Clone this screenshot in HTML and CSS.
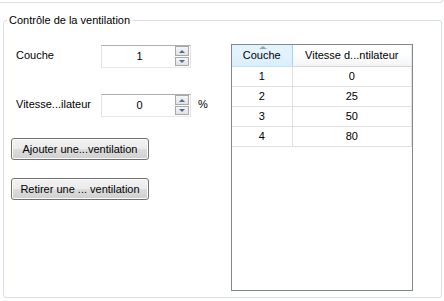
FILE: index.html
```html
<!DOCTYPE html>
<html lang="fr">
<head>
  <meta charset="UTF-8">
  <title>Contrôle de la ventilation</title>
  <link rel="stylesheet" href="styles.css">
</head>
<body>

  <!-- bottom edge of the group above -->
  <div class="prev-group"></div>

  <fieldset class="group">
    <legend>Contrôle de la ventilation</legend>

    <div class="content">
      <div class="controls">
        <div class="field-row">
          <label class="field-label">Couche</label>
          <div class="spinbox">
            <span class="spin-value">1</span>
            <div class="spin-buttons">
              <span class="spin-btn up"></span>
              <span class="spin-btn down"></span>
            </div>
          </div>
        </div>

        <div class="field-row second">
          <label class="field-label">Vitesse...ilateur</label>
          <div class="spinbox">
            <span class="spin-value">0</span>
            <div class="spin-buttons">
              <span class="spin-btn up"></span>
              <span class="spin-btn down"></span>
            </div>
          </div>
          <span class="unit">%</span>
        </div>

        <button class="win-btn first">Ajouter une...ventilation</button>
        <button class="win-btn">Retirer une ... ventilation</button>
      </div>

      <div class="table-box">
        <table class="grid">
          <thead>
            <tr>
              <th class="col-layer sorted">Couche</th>
              <th class="col-speed">Vitesse d...ntilateur</th>
            </tr>
          </thead>
          <tbody>
            <tr><td>1</td><td>0</td></tr>
            <tr><td>2</td><td>25</td></tr>
            <tr><td>3</td><td>50</td></tr>
            <tr><td>4</td><td>80</td></tr>
          </tbody>
        </table>
      </div>
    </div>
  </fieldset>

</body>
</html>
```

FILE: styles.css
```css
* {
  box-sizing: border-box;
}

body {
  margin: 0;
  padding: 0;
  background-color: #fff;
  font-family: "Liberation Sans", Arial, sans-serif;
  font-size: 11px;
  color: #000;
  overflow: hidden;
}

.prev-group {
  width: 447px;
  height: 3px;
  margin-left: -4px;
  border-bottom: 1px solid #d5dfe5;
  border-right: 1px solid #d5dfe5;
  border-bottom-right-radius: 3px;
}

.group {
  width: 439px;
  height: 285px;
  margin: 10px 0 0 3px;
  padding: 0;
  border: 1px solid #d5dfe5;
  border-radius: 3px;
}

.group legend {
  margin-left: 3px;
  padding: 0 3px 0 2px;
  line-height: 14px;
  color: #000;
}

.content {
  display: flex;
  padding-top: 17px;
}

.controls {
  width: 227px;
  padding-left: 7px;
  display: flex;
  flex-direction: column;
  align-items: flex-start;
}

.field-row {
  display: flex;
  align-items: center;
  height: 23px;
  margin-top: 1px;
}

.field-row.second {
  margin-top: 26px;
}

.field-label {
  width: 90px;
  padding-left: 5px;
  padding-bottom: 3px;
}

.spinbox {
  width: 90px;
  height: 23px;
  display: flex;
  border: 1px solid #e2e3ea;
  border-top-color: #abadb3;
  border-bottom-color: #e3e9ef;
  background: #fff;
}

.spin-value {
  flex: 1;
  text-align: center;
  line-height: 21px;
  padding-left: 2px;
}

.spin-buttons {
  width: 15px;
  display: flex;
  flex-direction: column;
  padding: 0 1px 1px 0;
}

.spin-btn {
  flex: 1;
  position: relative;
  border: 1px solid #a9a9a9;
  background: linear-gradient(#f5f5f5, #e2e2e2);
}

.spin-btn.up {
  margin-bottom: 1px;
}

.spin-btn::after {
  content: "";
  position: absolute;
  left: 3px;
  top: 3px;
  border-left: 3px solid transparent;
  border-right: 3px solid transparent;
}

.spin-btn.up::after {
  border-bottom: 3px solid #4c6a9e;
}

.spin-btn.down::after {
  top: 2px;
  border-top: 3px solid #4c6a9e;
}

.unit {
  margin-left: 7px;
  padding-bottom: 3px;
}

.win-btn {
  width: 138px;
  height: 22px;
  margin-top: 18px;
  padding: 0 0 1px;
  font-family: inherit;
  font-size: 11px;
  color: #000;
  border: 1px solid #707070;
  border-radius: 3px;
  background: linear-gradient(#f2f2f2 0%, #ebebeb 50%, #dddddd 50%, #cfcfcf 100%);
  box-shadow: inset 0 0 0 1px #fcfcfc;
}

.win-btn.first {
  margin-top: 21px;
}

.table-box {
  width: 182px;
  height: 247px;
  border: 1px solid #828790;
  background: #fff;
}

.grid {
  width: 100%;
  border-collapse: collapse;
  table-layout: fixed;
}

.grid th {
  height: 21px;
  padding: 0 0 1px;
  font-weight: normal;
  text-align: center;
  border-right: 1px solid #e3e8ee;
  border-bottom: 1px solid #d5d5d5;
  background: linear-gradient(#ffffff 0%, #ffffff 40%, #f3f4f6 100%);
}

.grid th.col-layer {
  width: 60px;
}

.grid th.sorted {
  position: relative;
  background: linear-gradient(#e3f3fc 0%, #e3f3fc 40%, #d9eefb 100%);
  border-right-color: #96d9f9;
  border-bottom-color: #c3e4f7;
}

.grid th.sorted::before {
  content: "";
  position: absolute;
  left: 27px;
  top: 1px;
  border-left: 4px solid transparent;
  border-right: 4px solid transparent;
  border-bottom: 3px solid #97a5bd;
}

.grid td {
  height: 20px;
  padding: 0 0 1px;
  text-align: center;
  border-right: 1px solid #e0e0e0;
  border-bottom: 1px solid #e0e0e0;
}
```
